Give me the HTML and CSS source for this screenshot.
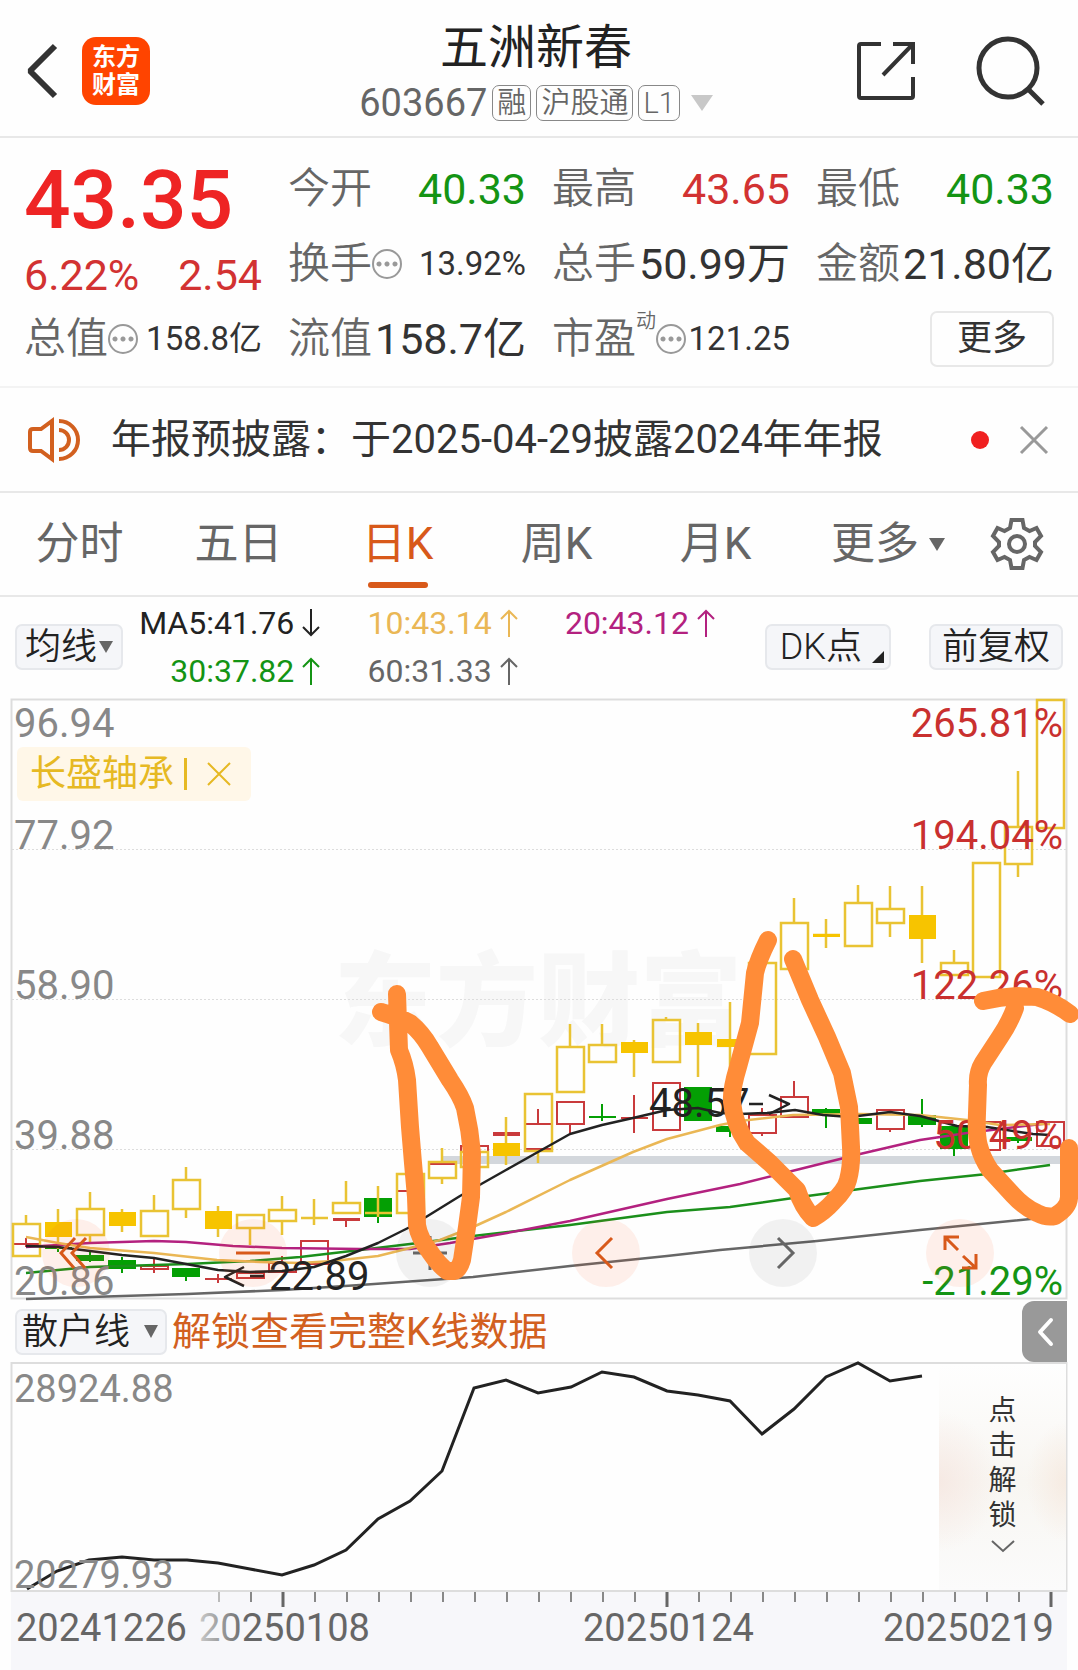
FILE: index.html
```html
<!DOCTYPE html>
<html lang="zh-CN">
<head>
<meta charset="utf-8">
<meta name="viewport" content="width=device-width, initial-scale=1">
<title>五洲新春 603667</title>
<link rel="stylesheet" href="styles.css">
</head>
<body>
<header class="topbar">
  <div class="topbar-side">
    <button class="icon-btn" aria-label="返回"><svg width="32" height="56" viewBox="0 0 32 56"><path d="M29 3 4 28l25 25" fill="none" stroke="#333" stroke-width="6" stroke-linejoin="bevel"/></svg></button>
    <a class="logo" href="#"><span>东方</span><span>财富</span></a>
  </div>
  <div class="stock">
    <h1>五洲新春</h1>
    <div class="stock-meta">
      <span class="code">603667</span><span class="badge">融</span><span class="badge">沪股通</span><span class="badge">L1</span>
      <svg class="caret" width="22" height="16" viewBox="0 0 22 16"><path d="M0 0h22L11 16z" fill="#c8c8c8"/></svg>
    </div>
  </div>
  <div class="topbar-side topbar-end">
    <button class="icon-btn" aria-label="分享"><svg width="60" height="60" viewBox="0 0 60 60" fill="none" stroke="#333" stroke-width="4"><path d="M25 3H5Q3 3 3 5v50q0 2 2 2h50q2 0 2-2V36M37 3h20v20M57 3 27 34"/></svg></button>
    <button class="icon-btn" aria-label="搜索"><svg width="70" height="70" viewBox="0 0 70 70" fill="none" stroke="#333" stroke-width="5"><circle cx="32" cy="32" r="29"/><path d="m52 53 15 15"/></svg></button>
  </div>
</header>

<section class="quote">
  <div class="price">
    <strong>43.35</strong>
    <div class="change"><span>6.22%</span><span>2.54</span></div>
  </div>
  <div class="stat"><span class="label">今开</span><span class="num down">40.33</span></div>
  <div class="stat"><span class="label">最高</span><span class="num up">43.65</span></div>
  <div class="stat"><span class="label">最低</span><span class="num down">40.33</span></div>
  <div class="stat"><span class="label">换手<i class="info"></i></span><span class="num small">13.92%</span></div>
  <div class="stat"><span class="label">总手</span><span class="num">50.99万</span></div>
  <div class="stat"><span class="label">金额</span><span class="num">21.80亿</span></div>
  <div class="stat"><span class="label">总值<i class="info"></i></span><span class="num small">158.8亿</span></div>
  <div class="stat"><span class="label">流值</span><span class="num">158.7亿</span></div>
  <div class="stat"><span class="label">市盈<sup>动</sup><i class="info"></i></span><span class="num small">121.25</span></div>
  <div class="stat stat-end"><button class="more-btn">更多</button></div>
</section>

<section class="notice">
  <svg width="52" height="44" viewBox="0 0 52 44" fill="none" stroke="#d2601f" stroke-width="4"><path d="M24 3v38L13 33H5q-3 0-3-3V14q0-3 3-3h8zM31 12a10 10 0 0 1 0 20M31 3a19 19 0 0 1 0 38"/></svg>
  <a class="notice-text" href="#">年报预披露：于2025-04-29披露2024年年报</a>
  <span class="dot"></span>
  <button class="icon-btn" aria-label="关闭"><svg width="30" height="30" viewBox="0 0 30 30"><path d="m2 2 26 26M28 2 2 28" stroke="#999" stroke-width="3"/></svg></button>
</section>

<nav class="tabs">
  <a href="#">分时</a>
  <a href="#">五日</a>
  <a class="active" href="#">日K</a>
  <a href="#">周K</a>
  <a href="#">月K</a>
  <a href="#">更多<svg width="16" height="13" viewBox="0 0 16 13"><path d="M0 0h16L8 13z" fill="#666"/></svg></a>
  <button class="icon-btn" aria-label="设置"><svg width="52" height="52" viewBox="0 0 52 52" fill="none" stroke="#666" stroke-width="4"><path d="M20.500 2h11l1.500 8 5.500 3 7-3 4.500 8-6 6v4l6 6-4.500 8-7-3-5.500 3-1.500 8h-11L19 42l-5.500-3-7 3L2 34l6-6v-4l-6-6 4.500-8 7 3L19 10z"/><circle cx="26" cy="26" r="8"/></svg></button>
</nav>

<section class="averages">
  <button class="chip">均线<svg width="14" height="12" viewBox="0 0 14 12"><path d="M0 0h14L7 12z" fill="#666"/></svg></button>
  <div class="ma-list">
    <span class="ma5">MA5:41.76<svg width="18" height="28" viewBox="0 0 18 28"><path d="M9 0v26M1 18l8 8 8-8"/></svg></span>
    <span class="ma10">10:43.14<svg width="18" height="28" viewBox="0 0 18 28"><path d="M9 28V2M1 10l8-8 8 8"/></svg></span>
    <span class="ma20">20:43.12<svg width="18" height="28" viewBox="0 0 18 28"><path d="M9 28V2M1 10l8-8 8 8"/></svg></span>
    <span class="ma30">30:37.82<svg width="18" height="28" viewBox="0 0 18 28"><path d="M9 28V2M1 10l8-8 8 8"/></svg></span>
    <span class="ma60">60:31.33<svg width="18" height="28" viewBox="0 0 18 28"><path d="M9 28V2M1 10l8-8 8 8"/></svg></span>
  </div>
  <button class="chip chip-dk">DK点<svg width="12" height="12" viewBox="0 0 12 12"><path d="M12 0v12H0z" fill="#222"/></svg></button>
  <button class="chip">前复权</button>
</section>

<section class="chart">
  <svg class="plot" viewBox="0 697 1078 604" role="img" aria-label="日K线图">
    <text class="watermark" x="334" y="1038">东方财富</text>
    <path d="M12 849.5h1054M12 999.5h1054M12 1149.5h1054" stroke="#ddd" stroke-dasharray="2 2"/>
    <path d="M11.500 699.500h1055v599h-1055z" fill="none" stroke="#ddd" stroke-width="2"/>
    <path d="M441 1160h625" stroke="#d3d7dc" stroke-width="8"/>
    <g fill="none" stroke="#c93a3c" stroke-width="2">
      <path d="M13 1244h27M26 1238v9M141 1266h27v3h-27zM154 1259v14M205 1279h27M218 1274v9M237 1273h27v5h-27zM269 1263h27v9h-27zM282 1256v7M301 1241h27v23h-27zM333 1219h27M333 1220h27M346 1219v8M397 1191h27M429 1164h27M461 1146h27v6h-27zM493 1133h27M493 1135h27M525 1124h27M538 1109v15M525 1149h27M557 1102h27v22h-27zM570 1124v9M621 1118h27M634 1095v38M653 1083h27v47h-27zM749 1115h27v18h-27zM762 1108v7M762 1133v3M781 1097h27v20h-27zM794 1081v16M877 1110h27v19h-27zM890 1129v3M973 1122h27v28h-27zM1037 1122h27v24h-27z"/>
    </g>
    <g fill="#049f04" stroke="#049f04" stroke-width="2">
      <path d="M45 1248h27M58 1246v6M77 1256h26v4H77zM90 1252v10M109 1261h26v7h-26zM122 1257v16M173 1269h26v7h-26zM186 1276v5M365 1199h26v17h-26zM378 1216v7M589 1117h27M602 1104v17M685 1088h26v32h-26zM717 1127h26v4h-26zM730 1131v6M813 1110h26v4h-26zM826 1108v20M845 1119h26v4h-26zM909 1116h26v8h-26zM922 1099v28M941 1127h26v21h-26zM954 1148v8M1005 1138h26v2h-26zM1018 1136v7"/>
    </g>
    <g fill="none" stroke="#e9c333" stroke-width="2.500">
      <path d="M13 1224h27v32H13zM26 1215v9M58 1209v40M77 1209h27v26H77zM90 1192v17M90 1235v7M122 1209v23M141 1211h27v25h-27zM154 1195v16M173 1180h27v29h-27zM186 1167v13M186 1209v9M218 1206v31M237 1215h27v13h-27zM250 1228v17M269 1210h27v11h-27zM282 1196v14M282 1221v14M301 1218h27M314 1199v26M333 1203h27v10h-27zM346 1181v22M365 1213h27M378 1186v31M397 1174h27v39h-27zM429 1162h27v16h-27zM442 1148v14M442 1178v6M461 1152h27v15h-27zM506 1117v48M525 1094h27v57h-27zM538 1151v12M557 1047h27v45h-27zM570 1024v23M589 1045h27v17h-27zM602 1024v21M634 1040v37M653 1020h27v42h-27zM666 1017v3M698 1023v54M730 1002v68M749 963h27v91h-27zM781 923h27v46h-27zM794 898v25M813 935h27M826 919v29M845 903h27v43h-27zM858 885v18M877 909h27v14h-27zM890 886v23M890 923v14M922 886v77M941 963h27v12h-27zM954 950v13M973 863h27v114h-27zM1005 827h27v37h-27zM1018 771v56M1018 864v13M1037 700h27v128h-27z"/>
    </g>
    <path fill="#f7c400" d="M45 1222h27v15H45zM109 1212h27v14h-27zM205 1211h27v18h-27zM493 1143h27v13h-27zM621 1042h27v11h-27zM685 1032h27v13h-27zM717 1039h27v8h-27zM813 934h27v3h-27zM909 915h27v24h-27z"/>
    <g fill="none" stroke-width="2.500" stroke-linejoin="round">
      <path stroke="#666" d="M26 1299 187 1294l96-4 77-5 113-8 97-11 97-10 53-6 97-9 103-11 130-13"/>
      <path stroke="#1b8f1b" d="M26 1273l64-6 97-3 63-3 50-4 60-7 50-6 63-8 97-11 97-13 63-5 70-10 60-8 60-8 67-7 63-9"/>
      <path stroke="#b3217f" d="M26 1247l64-4 32-1 32-1 32 1 47 4 49 2 78 1h50l40-6 57-10 63-12 97-22 73-15 60-15 60-15 60-14 47-7 83-10"/>
      <path stroke="#eab755" d="M26 1237l32 6 32 5 64 5 63 7 43 2 40 1 33-2 45-5 32-8 30-8 33-13 33-15 64-32 63-28 34-13 53-14 20-4 53-6 67-1 60 1 47 5 33 5 50-1"/>
      <path stroke="#222" d="M26 1246l32 1 32 4 32 4 32 3 32 6 32 6 32 2 32-1 32-4 32-11 32-13 32-16 16-10 34-21 46-26 64-36 32-9 31-7 34-8 31-2 22 5 20 1 27-1 28-3 28 5 27 2 40-5 30 4 37 10 30 1 46 7 17 1"/>
      <path stroke="#222" d="M244 1267l-19 10 19 9M250 1276h14M749 1104h14M769 1095l20 9-20 10"/>
    </g>
    <g class="axis-text">
      <text x="14" y="737">96.94</text>
      <text x="14" y="849">77.92</text>
      <text x="14" y="999">58.90</text>
      <text x="14" y="1149">39.88</text>
      <text x="14" y="1295">20.86</text>
    </g>
    <g class="axis-text rise">
      <text x="1063" y="737">265.81%</text>
      <text x="1063" y="849">194.04%</text>
      <text x="1063" y="999">122.26%</text>
      <text x="1063" y="1149">50.49%</text>
      <text class="fall" x="1063" y="1295">-21.29%</text>
    </g>
    <g class="axis-text mark">
      <text x="269" y="1290">22.89</text>
      <text x="649" y="1117">48.57</text>
    </g>
  </svg>
  <div class="compare">长盛轴承<span class="bar"></span><button class="icon-btn" aria-label="移除"><svg width="24" height="24" viewBox="0 0 24 24"><path d="m1 1 22 22M23 1 1 23" stroke="#e6b923" stroke-width="2"/></svg></button></div>
  <div class="controls">
    <button class="warm" aria-label="最左"><svg viewBox="0 0 68 68"><path d="M33 19 19 34l13 15M44 19 30 34l13 15"/></svg></button>
    <button class="warm" aria-label="缩小"><svg viewBox="0 0 68 68"><path d="M17 34h34"/></svg></button>
    <button class="cool" aria-label="放大"><svg viewBox="0 0 68 68"><path d="M17 34h34M34 17v34"/></svg></button>
    <button class="warm" aria-label="左移"><svg viewBox="0 0 68 68"><path d="M40 19 25 34l15 15"/></svg></button>
    <button class="cool" aria-label="右移"><svg viewBox="0 0 68 68"><path d="m29 19 15 15-15 15"/></svg></button>
    <button class="warm" aria-label="全屏"><svg viewBox="0 0 68 68"><path d="M19 31V18h14M20 19l12 12M37 37l13 12M50 35v14H36"/></svg></button>
  </div>
  <svg class="drawing" viewBox="0 697 1078 604" fill="none" stroke="#ff8c38" stroke-width="18" stroke-linecap="round" stroke-linejoin="round">
    <path d="M381 1012 Q398 1017 410 1023 Q422 1033 430 1047 L450 1080 Q461 1096 465 1108 Q470 1130 472 1153 L471 1197 L467 1227 L462 1260 Q459 1270 454 1271 L447 1271 Q438 1264 430 1252 Q419 1238 417 1225 L416 1197 L413 1163 L410 1127 L407 1080 Q405 1064 399 1050 L397 994"/>
    <path d="M768 940 Q758 960 755 973 L750 1023 L738 1067 Q731 1090 732 1102 Q734 1124 747 1143 L770 1163 L797 1190 Q802 1206 813 1218 Q824 1212 833 1202 Q846 1189 848 1180 Q852 1165 851 1147 L849 1107 L842 1073 L827 1037 L810 1000 L793 959"/>
    <path d="M983 1001 Q1000 997 1017 996 L1037 997 Q1054 1002 1070 1014M1015 1008 Q1010 1022 1000 1037 L983 1063 Q977 1073 978 1085 L977 1113 Q976 1136 979 1146 Q982 1158 990 1170 L1013 1195 Q1024 1207 1037 1213 Q1047 1218 1055 1216 Q1070 1207 1069 1195 L1069 1148"/>
  </svg>
</section>

<section class="indicator">
  <button class="chip">散户线<svg width="14" height="13" viewBox="0 0 14 13"><path d="M0 0h14L7 13z" fill="#666"/></svg></button>
  <a class="unlock-link" href="#">解锁查看完整K线数据</a>
  <button class="drawer" aria-label="展开"><svg width="18" height="30" viewBox="0 0 18 30"><path d="M15 3 4 15l11 12" fill="none" stroke="#fff" stroke-width="4" stroke-linecap="round" stroke-linejoin="round"/></svg></button>
</section>

<section class="subchart">
  <svg class="plot" viewBox="0 1362 1078 308" role="img" aria-label="散户线">
    <path d="M11 1592h1056v78H11z" fill="#f7f7fa"/>
    <path d="M11.500 1363h1055v228h-1055z" fill="none" stroke="#ddd" stroke-width="2"/>
    <path d="M27 1589l30-18 32-11 33-3 32 3h33l31 3 32 6 32 6 32-10 32-15 32-31 32-18 32-30 32-83 32-8 32 13 33-6 31-15 32 5 33 14 31 4 32 6 32 33 32-25 32-32 32-14 32 18 32-5" fill="none" stroke="#222" stroke-width="3"/>
    <g class="axis-text count">
      <text x="14" y="1402">28924.88</text>
      <text x="14" y="1588">20279.93</text>
    </g>
    <path d="M251 1592v10M315 1592v10M347 1592v10M379 1592v10M411 1592v10M443 1592v10M475 1592v10M507 1592v10M539 1592v10M571 1592v10M603 1592v10M635 1592v10M699 1592v10M731 1592v10M763 1592v10M795 1592v10M827 1592v10M859 1592v10M891 1592v10M923 1592v10M955 1592v10M987 1592v10M1019 1592v10" stroke="#888" stroke-width="2"/>
    <path d="M219 1592v10" stroke="#bbb" stroke-width="2"/>
    <path d="M283 1592v15M667 1592v15M1051 1592v15" stroke="#666" stroke-width="3"/>
    <defs><linearGradient id="fade" gradientUnits="userSpaceOnUse" x1="198" x2="246" y1="0" y2="0"><stop offset="0" stop-color="#ccc"/><stop offset="1" stop-color="#666"/></linearGradient></defs>
    <g class="axis-text count date">
      <text x="16" y="1641">20241226</text>
      <text x="199" y="1641" fill="url(#fade)">20250108</text>
      <text x="583" y="1641">20250124</text>
      <text x="883" y="1641">20250219</text>
    </g>
  </svg>
  <button class="unlock"><span>点击解锁</span><svg width="24" height="13" viewBox="0 0 24 13"><path d="m1 1 11 10L23 1" fill="none" stroke="#666" stroke-width="2"/></svg></button>
</section>
</body>
</html>
```
FILE: styles.css
```css
* { box-sizing: border-box; }

body {
  margin: 0;
  background: #fefefe;
  color: #333;
  font-family: Roboto, "Noto Sans CJK SC", sans-serif;
  font-weight: 400;
}

button {
  font: inherit;
  color: inherit;
  border: 0;
  padding: 0;
  background: none;
}

a { color: inherit; text-decoration: none; }
svg { display: block; flex: none; overflow: visible; }
.icon-btn { display: flex; align-items: center; justify-content: center; }

/* Top bar */
.topbar {
  display: grid;
  grid-template-columns: 1fr auto 1fr;
  padding: 16px 32px 10px 26px;
  border-bottom: 2px solid #e8e8e8;
}
.topbar-side { display: flex; align-items: center; gap: 24px; }
.topbar-end { justify-content: flex-end; gap: 60px; }
.logo {
  display: flex;
  flex-direction: column;
  align-items: center;
  justify-content: center;
  width: 68px;
  height: 68px;
  border-radius: 14px;
  background: #ff4400;
  color: #fff;
  font-size: 24px;
  line-height: 28px;
  font-weight: 700;
}
.stock { display: flex; flex-direction: column; align-items: center; }
.stock h1 { margin: 0; font-size: 48px; line-height: 64px; font-weight: 400; color: #222; }
.stock-meta { display: flex; align-items: center; gap: 5px; height: 46px; color: #666; }
.code { font-size: 38px; line-height: 48px; }
.badge {
  padding: 0 4px;
  border: 1px solid #888;
  border-radius: 7px;
  font-size: 29px;
  line-height: 34px;
  font-weight: 350;
}
.caret { margin-left: 6px; }

/* Quote */
.quote {
  display: grid;
  grid-template-columns: repeat(4, 1fr);
  grid-auto-rows: 75px;
  column-gap: 26px;
  padding: 13px 24px 10px;
  border-bottom: 2px solid #f3f3f3;
}
.price { grid-row: span 2; color: #d23232; }
.price strong { display: block; font-size: 82px; line-height: 98px; font-weight: 500; color: #ee2424; }
.change { display: flex; justify-content: space-between; font-size: 43px; line-height: 52px; }
.stat { display: flex; align-items: center; justify-content: space-between; white-space: nowrap; }
.stat-end { justify-content: flex-end; }
.label { display: flex; align-items: center; font-size: 42px; line-height: 60px; font-weight: 350; color: #666; }
.label sup { font-size: 20px; line-height: 24px; align-self: flex-start; }
.num { font-size: 43px; line-height: 60px; }
.small { font-size: 33px; }
.up { color: #d23232; }
.down { color: #149414; }
.info {
  width: 30px;
  height: 30px;
  border: 2px solid #999;
  border-radius: 50%;
  background: radial-gradient(circle, #999 2px, transparent 3px) center / 8px 8px;
  background-clip: content-box;
  padding: 9px 1px;
}
.more-btn {
  width: 124px;
  height: 56px;
  border: 2px solid #e8e8e8;
  border-radius: 7px;
  font-size: 35px;
  line-height: 48px;
}

/* Notice */
.notice {
  display: flex;
  align-items: center;
  padding: 22px 29px 21px 28px;
  border-bottom: 2px solid #e8e8e8;
}
.notice-text { flex: 1; margin-left: 31px; font-size: 40px; line-height: 60px; }
.dot { width: 18px; height: 18px; margin-right: 30px; border-radius: 50%; background: #f02020; }

/* Period tabs */
.tabs {
  display: grid;
  grid-template-columns: repeat(5, 159fr) 186fr 72fr;
  padding-right: 25px;
  border-bottom: 2px solid #e8e8e8;
  font-size: 44px;
  line-height: 102px;
  color: #666;
}
.tabs a { display: flex; align-items: center; justify-content: center; gap: 10px; position: relative; }
.tabs .active { color: #d8591a; }
.tabs .active::after {
  content: "";
  position: absolute;
  bottom: 7px;
  width: 60px;
  height: 6px;
  border-radius: 3px;
  background: #d8591a;
}

/* Moving averages */
.averages {
  display: grid;
  grid-template-columns: 108px minmax(0, 592px) 1fr auto;
  align-items: center;
  padding: 2px 15px 2px;
}
.chip {
  display: flex;
  align-items: center;
  justify-content: center;
  height: 46px;
  padding: 0 7px;
  border: 2px solid #e6e8ec;
  border-radius: 7px;
  background: #f5f6f9;
  color: #222;
  font-size: 36px;
  line-height: 40px;
  font-weight: 350;
}
.chip svg { margin-left: 2px; }
.averages > .chip:last-child { padding: 0 11px; }
.chip-dk { justify-self: end; margin-right: 38px; padding: 0 12px 0 13px; }
.chip-dk svg { align-self: flex-end; margin: 0 -7px 5px 10px; }
.ma-list { display: grid; grid-template-columns: repeat(3, 1fr); font-size: 32px; line-height: 48px; }
.ma-list span { display: flex; align-items: center; justify-content: flex-end; gap: 8px; }
.ma-list path { fill: none; stroke: currentColor; stroke-width: 2; }
.ma5 { color: #222; }
.ma10 { color: #eab755; }
.ma20 { color: #b3217f; }
.ma30 { color: #149414; }
.ma60 { color: #666; }

/* Candlestick chart */
.chart, .subchart { position: relative; }
.plot { width: 100%; }
.axis-text { font-size: 40px; fill: #888; }
.rise { fill: #c9302f; text-anchor: end; }
.fall { fill: #149414; }
.mark { fill: #222; }
.count { font-size: 38px; }
.date { fill: #666; }
.watermark { font-size: 102px; font-weight: 900; fill: #f7f7f7; }
.compare {
  position: absolute;
  top: 50px;
  left: 17px;
  display: flex;
  align-items: center;
  padding: 0 20px 0 13px;
  border-radius: 6px;
  background: #fff7e8;
  color: #e6b923;
  font-size: 36px;
  line-height: 54px;
}
.bar { width: 3px; height: 32px; margin: 0 20px 0 10px; background: #e6b923; }
.controls {
  position: absolute;
  left: 42px;
  right: 84px;
  bottom: 14px;
  display: flex;
  justify-content: space-between;
}
.controls button { width: 68px; height: 68px; border-radius: 50%; }
.controls path { fill: none; stroke: currentColor; stroke-width: 3; }
.warm { color: #d8591a; background: rgba(255, 90, 30, 0.09); }
.cool { color: #666; background: rgba(0, 0, 0, 0.05); }
.drawing { position: absolute; top: 0; left: 0; width: 100%; overflow: hidden; pointer-events: none; }

/* Indicator */
.indicator { display: flex; align-items: center; padding-left: 15px; }
.indicator .chip { padding: 0 7px 0 5px; }
.indicator .chip svg { margin-left: 14px; }
.unlock-link { flex: 1; margin-left: 5px; color: #d2601f; font-size: 39px; line-height: 56px; }
.drawer {
  display: flex;
  align-items: center;
  justify-content: center;
  width: 45px;
  height: 61px;
  margin-right: 11px;
  border-radius: 12px 0 0 12px;
  background: #999;
}
.unlock {
  position: absolute;
  top: 2px;
  right: 12px;
  display: flex;
  flex-direction: column;
  align-items: center;
  width: 127px;
  height: 226px;
  padding-top: 29px;
  background:
    radial-gradient(ellipse 60px 70px at 0 52%, rgba(246, 232, 226, 0.9), transparent),
    radial-gradient(ellipse 40px 60px at 100% 52%, rgba(246, 234, 224, 0.9), transparent),
    linear-gradient(#fefefe, #f8f6f2 52%, #fbfbfb);
}
.unlock span { width: 28px; font-size: 28px; line-height: 35px; }
.unlock svg { margin-top: 7px; }
```
